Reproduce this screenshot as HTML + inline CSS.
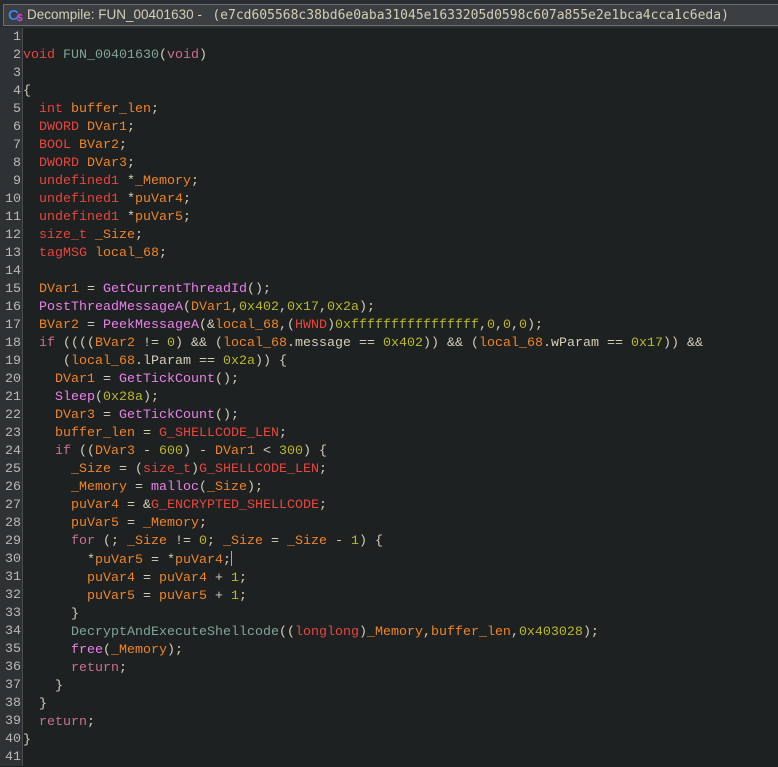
<!DOCTYPE html>
<html><head><meta charset="utf-8"><style>
html,body{margin:0;padding:0;width:778px;height:766px;overflow:hidden;background:#1e2122}
.title{position:absolute;left:0;top:0;width:778px;height:28px;background:#2b2e30}
.tb{position:absolute;left:3px;top:4px;width:775px;height:22px;background:#3c3f41;border-top:1px solid #6b6f72;border-bottom:1px solid #6b6f72;border-left:1px solid #6b6f72;box-sizing:border-box}
.tt{position:absolute;left:23px;top:2px;font:13.5px "Liberation Sans",sans-serif;color:#d6cdb5;white-space:pre}
.tt span{font-family:"DejaVu Sans Mono","Liberation Mono",monospace;font-size:13px;margin-left:3px}
.icon{position:absolute;left:4px;top:2px;font:bold 15px "Liberation Sans",sans-serif;color:#3f7fe8}
.icon2{position:absolute;left:13px;top:8px;font:bold 10px "Liberation Sans",sans-serif;color:#e040e0}
.gut{position:absolute;left:0;top:28px;width:22px;height:738px;background:#2f3234;border-right:1px solid #4a4d4f}
pre{margin:0;font:13.33px/18px "Liberation Mono",monospace;color:#d6cdb5;white-space:pre}
.ln{position:absolute;left:0;top:29px;width:21px;text-align:right;color:#b8b8b8}
.code{position:absolute;left:23px;top:29px}
.t{color:#e8453c}.k{color:#c9708e}.v{color:#ef8427}.f{color:#ea80ea}.n{color:#b9b92a}.g{color:#80a596}.r{color:#e8453c}
.cur{display:inline-block;width:1px;height:15px;background:#aaa;vertical-align:-3px}
</style></head><body>
<div class="title"><div class="tb"><div class="icon">C</div><div class="icon2">$</div><div class="tt">Decompile: FUN_00401630 -  <span>(e7cd605568c38bd6e0aba31045e1633205d0598c607a855e2e1bca4cca1c6eda)</span></div></div></div>
<div class="gut"></div>
<pre class="ln">1
2
3
4
5
6
7
8
9
10
11
12
13
14
15
16
17
18
19
20
21
22
23
24
25
26
27
28
29
30
31
32
33
34
35
36
37
38
39
40
41</pre>
<pre class="code">&#8203;
<span class="t">void</span> <span class="g">FUN_00401630</span>(<span class="k">void</span>)

{
  <span class="t">int</span> <span class="v">buffer_len</span>;
  <span class="t">DWORD</span> <span class="v">DVar1</span>;
  <span class="t">BOOL</span> <span class="v">BVar2</span>;
  <span class="t">DWORD</span> <span class="v">DVar3</span>;
  <span class="t">undefined1</span> *<span class="v">_Memory</span>;
  <span class="t">undefined1</span> *<span class="v">puVar4</span>;
  <span class="t">undefined1</span> *<span class="v">puVar5</span>;
  <span class="t">size_t</span> <span class="v">_Size</span>;
  <span class="t">tagMSG</span> <span class="v">local_68</span>;

  <span class="v">DVar1</span> = <span class="f">GetCurrentThreadId</span>();
  <span class="f">PostThreadMessageA</span>(<span class="v">DVar1</span>,<span class="n">0x402</span>,<span class="n">0x17</span>,<span class="n">0x2a</span>);
  <span class="v">BVar2</span> = <span class="f">PeekMessageA</span>(&amp;<span class="v">local_68</span>,(<span class="t">HWND</span>)<span class="n">0xffffffffffffffff</span>,<span class="n">0</span>,<span class="n">0</span>,<span class="n">0</span>);
  <span class="k">if</span> ((((<span class="v">BVar2</span> != <span class="n">0</span>) &amp;&amp; (<span class="v">local_68</span>.message == <span class="n">0x402</span>)) &amp;&amp; (<span class="v">local_68</span>.wParam == <span class="n">0x17</span>)) &amp;&amp;
     (<span class="v">local_68</span>.lParam == <span class="n">0x2a</span>)) {
    <span class="v">DVar1</span> = <span class="f">GetTickCount</span>();
    <span class="f">Sleep</span>(<span class="n">0x28a</span>);
    <span class="v">DVar3</span> = <span class="f">GetTickCount</span>();
    <span class="v">buffer_len</span> = <span class="r">G_SHELLCODE_LEN</span>;
    <span class="k">if</span> ((<span class="v">DVar3</span> - <span class="n">600</span>) - <span class="v">DVar1</span> &lt; <span class="n">300</span>) {
      <span class="v">_Size</span> = (<span class="t">size_t</span>)<span class="r">G_SHELLCODE_LEN</span>;
      <span class="v">_Memory</span> = <span class="f">malloc</span>(<span class="v">_Size</span>);
      <span class="v">puVar4</span> = &amp;<span class="r">G_ENCRYPTED_SHELLCODE</span>;
      <span class="v">puVar5</span> = <span class="v">_Memory</span>;
      <span class="k">for</span> (; <span class="v">_Size</span> != <span class="n">0</span>; <span class="v">_Size</span> = <span class="v">_Size</span> - <span class="n">1</span>) {
        *<span class="v">puVar5</span> = *<span class="v">puVar4</span>;<span class="cur"></span>
        <span class="v">puVar4</span> = <span class="v">puVar4</span> + <span class="n">1</span>;
        <span class="v">puVar5</span> = <span class="v">puVar5</span> + <span class="n">1</span>;
      }
      <span class="g">DecryptAndExecuteShellcode</span>((<span class="t">longlong</span>)<span class="v">_Memory</span>,<span class="v">buffer_len</span>,<span class="n">0x403028</span>);
      <span class="f">free</span>(<span class="v">_Memory</span>);
      <span class="k">return</span>;
    }
  }
  <span class="k">return</span>;
}
</pre>
</body></html>
